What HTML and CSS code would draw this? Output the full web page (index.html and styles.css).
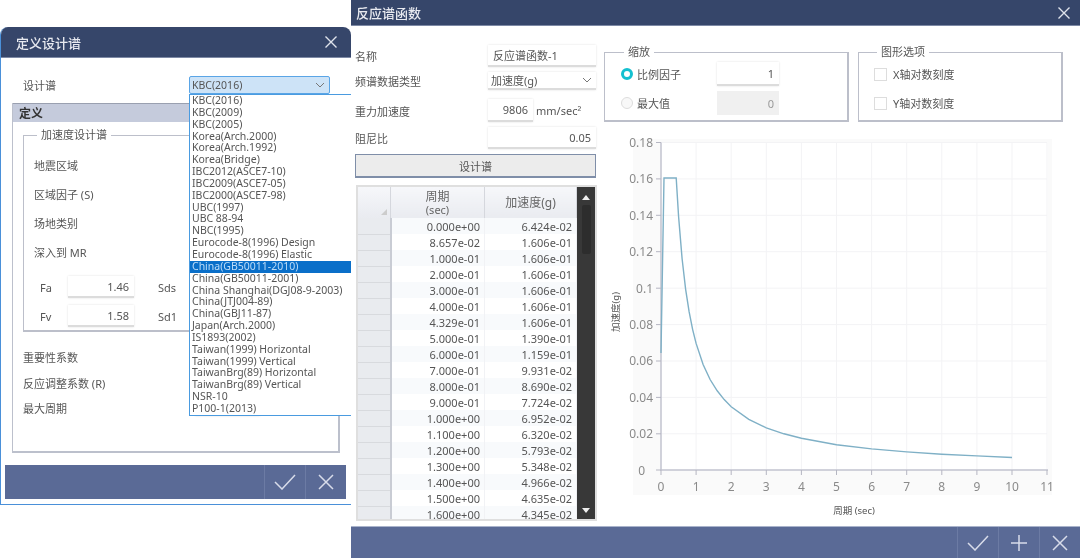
FILE: index.html
```html
<!DOCTYPE html>
<html lang="zh-CN">

<head>
    <meta charset="UTF-8">
    <meta name="viewport" content="width=device-width, initial-scale=1.0">
    <title>反应谱函数</title>
    <link rel="stylesheet" href="styles.css">
</head>

<body>
    <div class="desk">
        <!-- 定义设计谱 -->
        <div class="window window-left">
            <div class="title-bar">
                <span class="title-text">定义设计谱</span>
                <svg class="close-icon" width="14" height="14" viewBox="0 0 14 14">
                    <path d="M1.5 1.5l11 11M12.5 1.5l-11 11" />
                </svg>
            </div>
            <div class="combo-row">
                <span class="combo-label">设计谱</span>
                <div class="combo">
                    <span>KBC(2016)</span>
                    <svg class="chevron" width="10" height="6" viewBox="0 0 10 6">
                        <path d="M1 1l4 4 4-4" />
                    </svg>
                </div>
            </div>
            <div class="def-panel">
                <div class="def-header">定义</div>
                <fieldset class="group accel-group">
                    <legend>加速度设计谱</legend>
                    <div class="param-row">地震区域</div>
                    <div class="param-row">区域因子 (S)</div>
                    <div class="param-row">场地类别</div>
                    <div class="param-row">深入到 MR</div>
                    <div class="coef-row">
                        <span class="coef-name">Fa</span>
                        <div class="input coef-input">1.46</div>
                        <span class="coef-extra">Sds</span>
                    </div>
                    <div class="coef-row">
                        <span class="coef-name">Fv</span>
                        <div class="input coef-input">1.58</div>
                        <span class="coef-extra">Sd1</span>
                    </div>
                </fieldset>
                <div class="factor-list">
                    <div class="factor-row">重要性系数</div>
                    <div class="factor-row">反应调整系数 (R)</div>
                    <div class="factor-row">
                        <span class="factor-name">最大周期</span>
                        <div class="input period-input"></div>
                        <span class="period-unit">sec</span>
                    </div>
                </div>
            </div>
            <div class="action-bar">
                <button class="action-btn">
                    <svg width="22" height="16" viewBox="0 0 22 16"><path d="M1 8l7 7L21 1" /></svg>
                </button>
                <button class="action-btn">
                    <svg width="16" height="16" viewBox="0 0 16 16"><path d="M1 1l14 14M15 1L1 15" /></svg>
                </button>
            </div>
            <ul class="dropdown">
                <li>KBC(2016)</li>
                <li>KBC(2009)</li>
                <li>KBC(2005)</li>
                <li>Korea(Arch.2000)</li>
                <li>Korea(Arch.1992)</li>
                <li>Korea(Bridge)</li>
                <li>IBC2012(ASCE7-10)</li>
                <li>IBC2009(ASCE7-05)</li>
                <li>IBC2000(ASCE7-98)</li>
                <li>UBC(1997)</li>
                <li>UBC 88-94</li>
                <li>NBC(1995)</li>
                <li>Eurocode-8(1996) Design</li>
                <li>Eurocode-8(1996) Elastic</li>
                <li class="selected">China(GB50011-2010)</li>
                <li>China(GB50011-2001)</li>
                <li>China Shanghai(DGJ08-9-2003)</li>
                <li>China(JTJ004-89)</li>
                <li>China(GBJ11-87)</li>
                <li>Japan(Arch.2000)</li>
                <li>IS1893(2002)</li>
                <li>Taiwan(1999) Horizontal</li>
                <li>Taiwan(1999) Vertical</li>
                <li>TaiwanBrg(89) Horizontal</li>
                <li>TaiwanBrg(89) Vertical</li>
                <li>NSR-10</li>
                <li>P100-1(2013)</li>
            </ul>
        </div>

        <!-- 反应谱函数 -->
        <div class="window window-right">
            <div class="title-bar title-bar-small">
                <span class="title-text">反应谱函数</span>
                <svg class="close-icon" width="14" height="14" viewBox="0 0 14 14">
                    <path d="M1.5 1.5l11 11M12.5 1.5l-11 11" />
                </svg>
            </div>
            <div class="func-body">
                <div class="func-left">
                    <div class="form-row row-name">
                        <span class="form-label">名称</span>
                        <div class="input text-left form-input">反应谱函数-1</div>
                    </div>
                    <div class="form-row row-type">
                        <span class="form-label">频谱数据类型</span>
                        <div class="input text-left form-input select">
                            <span>加速度(g)</span>
                            <svg class="chevron" width="10" height="6" viewBox="0 0 10 6">
                                <path d="M1 1l4 4 4-4" />
                            </svg>
                        </div>
                    </div>
                    <div class="form-row row-gravity">
                        <span class="form-label">重力加速度</span>
                        <div class="input gravity-input">9806</div>
                        <span class="unit">mm/sec²</span>
                    </div>
                    <div class="form-row row-damping">
                        <span class="form-label">阻尼比</span>
                        <div class="input form-input">0.05</div>
                    </div>
                    <button class="spectrum-btn">设计谱</button>
                    <div class="grid-wrap">
                        <table class="data-grid">
                            <thead>
                                <tr>
                                    <th class="corner"><span class="corner-mark"></span></th>
                                    <th>周期<br><small>(sec)</small></th>
                                    <th>加速度(g)</th>
                                </tr>
                            </thead>
                            <tbody>
                                <tr><td class="row-head"></td><td>0.000e+00</td><td>6.424e-02</td></tr>
                                <tr><td class="row-head"></td><td>8.657e-02</td><td>1.606e-01</td></tr>
                                <tr><td class="row-head"></td><td>1.000e-01</td><td>1.606e-01</td></tr>
                                <tr><td class="row-head"></td><td>2.000e-01</td><td>1.606e-01</td></tr>
                                <tr><td class="row-head"></td><td>3.000e-01</td><td>1.606e-01</td></tr>
                                <tr><td class="row-head"></td><td>4.000e-01</td><td>1.606e-01</td></tr>
                                <tr><td class="row-head"></td><td>4.329e-01</td><td>1.606e-01</td></tr>
                                <tr><td class="row-head"></td><td>5.000e-01</td><td>1.390e-01</td></tr>
                                <tr><td class="row-head"></td><td>6.000e-01</td><td>1.159e-01</td></tr>
                                <tr><td class="row-head"></td><td>7.000e-01</td><td>9.931e-02</td></tr>
                                <tr><td class="row-head"></td><td>8.000e-01</td><td>8.690e-02</td></tr>
                                <tr><td class="row-head"></td><td>9.000e-01</td><td>7.724e-02</td></tr>
                                <tr><td class="row-head"></td><td>1.000e+00</td><td>6.952e-02</td></tr>
                                <tr><td class="row-head"></td><td>1.100e+00</td><td>6.320e-02</td></tr>
                                <tr><td class="row-head"></td><td>1.200e+00</td><td>5.793e-02</td></tr>
                                <tr><td class="row-head"></td><td>1.300e+00</td><td>5.348e-02</td></tr>
                                <tr><td class="row-head"></td><td>1.400e+00</td><td>4.966e-02</td></tr>
                                <tr><td class="row-head"></td><td>1.500e+00</td><td>4.635e-02</td></tr>
                                <tr><td class="row-head"></td><td>1.600e+00</td><td>4.345e-02</td></tr>
                            </tbody>
                        </table>
                        <div class="scrollbar">
                            <span class="arrow-up"></span>
                            <span class="thumb"></span>
                            <span class="arrow-down"></span>
                        </div>
                    </div>
                </div>
                <div class="func-right">
                    <div class="option-row">
                        <fieldset class="group scale-group">
                            <legend>缩放</legend>
                            <div class="scale-row">
                                <span class="radio radio-on"></span>
                                <span class="scale-label">比例因子</span>
                                <div class="input scale-input">1</div>
                            </div>
                            <div class="scale-row">
                                <span class="radio"></span>
                                <span class="scale-label">最大值</span>
                                <div class="input scale-input input-disabled">0</div>
                            </div>
                        </fieldset>
                        <fieldset class="group graph-group">
                            <legend>图形选项</legend>
                            <div class="check-row"><span class="checkbox"></span>X轴对数刻度</div>
                            <div class="check-row"><span class="checkbox"></span>Y轴对数刻度</div>
                        </fieldset>
                    </div>
                    <!-- viewBox 用页面坐标, 点位直接从表格数据换算 -->
                    <svg class="chart" width="470" height="400" viewBox="604 125 470 400">
                        <rect x="633" y="138" width="419" height="356" fill="#fafafa" />
                        <rect x="661" y="142" width="387" height="327" fill="#fff" />
                        <path class="grid-line" d="M696.1 142V469M731.2 142V469M766.3 142V469M801.4 142V469M836.5 142V469M871.6 142V469M906.7 142V469M941.8 142V469M976.9 142V469M1012 142V469M1047 142V469" />
                        <path class="grid-line" d="M661 141.5H1047M661 177.9H1047M661 214.3H1047M661 250.7H1047M661 287.2H1047M661 323.6H1047M661 360H1047M661 396.4H1047M661 432.8H1047" />
                        <path class="axis-line" d="M661 141.5V469H1048" />
                        <path class="axis-tick" d="M656 141.5h5M656 177.9h5M656 214.3h5M656 250.7h5M656 287.2h5M656 323.6h5M656 360h5M656 396.4h5M656 432.8h5M656 469h5" />
                        <path class="axis-tick" d="M661 469v5M696.1 469v5M731.2 469v5M766.3 469v5M801.4 469v5M836.5 469v5M871.6 469v5M906.7 469v5M941.8 469v5M976.9 469v5M1012 469v5M1047 469v5" />
                        <polyline class="curve" points="661,352 664,177 676.2,177 678.6,215.7 682.1,257.8 685.6,288.1 689.1,310.7 692.6,328.3 696.1,342.4 703.1,363.5 710.1,378.5 717.2,389.8 724.2,398.6 731.2,405.7 748.8,418.3 766.3,426.8 783.9,432.8 801.4,437.3 836.5,443.7 871.6,447.9 906.7,450.9 941.8,453.2 976.9,454.9 1012,456.5" />
                        <g class="y-labels">
                            <text x="653" y="146">0.18</text>
                            <text x="653" y="182">0.16</text>
                            <text x="653" y="219">0.14</text>
                            <text x="653" y="255">0.12</text>
                            <text x="653" y="292">0.1</text>
                            <text x="653" y="328">0.08</text>
                            <text x="653" y="364">0.06</text>
                            <text x="653" y="401">0.04</text>
                            <text x="653" y="437">0.02</text>
                            <text x="645" y="474">0</text>
                        </g>
                        <g class="x-labels">
                            <text x="661" y="490">0</text>
                            <text x="696.1" y="490">1</text>
                            <text x="731.2" y="490">2</text>
                            <text x="766.3" y="490">3</text>
                            <text x="801.4" y="490">4</text>
                            <text x="836.5" y="490">5</text>
                            <text x="871.6" y="490">6</text>
                            <text x="906.7" y="490">7</text>
                            <text x="941.8" y="490">8</text>
                            <text x="976.9" y="490">9</text>
                            <text x="1012" y="490">10</text>
                            <text x="1047" y="490">11</text>
                        </g>
                        <text class="axis-title" x="854" y="513">周期 (sec)</text>
                        <text class="axis-title" transform="translate(619 311) rotate(-90)">加速度(g)</text>
                    </svg>
                </div>
            </div>
            <div class="action-bar action-bar-wide">
                <button class="action-btn">
                    <svg width="22" height="16" viewBox="0 0 22 16"><path d="M1 8l7 7L21 1" /></svg>
                </button>
                <button class="action-btn">
                    <svg width="18" height="18" viewBox="0 0 18 18"><path d="M9 1v16M1 9h16" /></svg>
                </button>
                <button class="action-btn">
                    <svg width="16" height="16" viewBox="0 0 16 16"><path d="M1 1l14 14M15 1L1 15" /></svg>
                </button>
            </div>
        </div>
    </div>
</body>

</html>
```

FILE: styles.css
```css
body {
    margin: 0;
    padding: 0;
    background: #fff;
    color: #555;
    font-family: "Noto Sans", "Noto Sans CJK SC", sans-serif;
    font-size: 11px;
}

.desk {
    position: relative;
    width: 1080px;
    height: 560px;
    overflow: hidden;
    filter: blur(0.4px);
}

.window {
    position: absolute;
    background: #fff;
    box-sizing: border-box;
    overflow: hidden;
}

.window-left {
    left: 0;
    top: 27px;
    width: 351px;
    height: 478px;
    border-left: 1px solid #4a90d9;
    border-bottom: 1px solid #4a90d9;
    border-radius: 8px 8px 0 0;
}

.window-right {
    left: 351px;
    top: 0;
    width: 729px;
    height: 558px;
}

.title-bar {
    height: 30px;
    background: #36466a;
    border-bottom: 1px solid #7d89a5;
    display: flex;
    align-items: center;
    justify-content: space-between;
    padding: 0 13px 0 15px;
}

.title-bar-small {
    height: 25px;
    padding: 0 9px 0 5px;
}

.title-text {
    color: #e8eaf0;
    font-size: 13px;
    font-weight: 500;
}

.close-icon path {
    fill: none;
    stroke: #dfe3ec;
    stroke-width: 1.4;
}

.chevron path {
    fill: none;
    stroke: #777;
    stroke-width: 1;
}

.combo-row {
    display: flex;
    align-items: center;
    margin-top: 18px;
    padding-left: 22px;
}

.combo-label {
    width: 166px;
}

.combo {
    width: 141px;
    height: 18px;
    box-sizing: border-box;
    background: #cde3f7;
    border: 1px solid #5aa5e6;
    border-radius: 2px;
    display: flex;
    align-items: center;
    justify-content: space-between;
    padding: 0 4px 0 2px;
    font-size: 10.5px;
}

.def-panel {
    margin: 9px 0 0 11px;
    width: 328px;
    height: 350px;
    box-sizing: border-box;
    border: 1px solid #bcc0cc;
    border-top: 0;
    border-bottom-width: 2px;
    border-right-width: 2px;
}

.def-header {
    height: 19px;
    line-height: 20px;
    background: #c5cbdc;
    border-top: 1px solid #9aa0b0;
    box-sizing: border-box;
    padding-left: 6px;
    font-size: 12px;
    font-weight: bold;
    color: #333;
}

.group {
    margin: 0;
    padding: 0;
    border: 1px solid #bcbfca;
    border-width: 1px 2px 2px 1px;
    min-width: 0;
}

.group legend {
    padding: 0 4px;
    margin-left: 3px;
    font-size: 11px;
    line-height: 14px;
}

.accel-group {
    margin: 6px 0 0 10px;
    width: 305px;
    height: 204px;
    box-sizing: border-box;
    padding: 9px 10px 0;
}

.param-row {
    height: 29px;
    line-height: 29px;
}

.coef-row {
    display: flex;
    align-items: center;
    height: 22px;
    margin-bottom: 7px;
    padding-left: 6px;
}

.param-row + .coef-row {
    margin-top: 9px;
}

.coef-name {
    width: 28px;
}

.coef-extra {
    margin-left: 24px;
}

.input {
    box-sizing: border-box;
    background: #fff;
    text-align: right;
    padding: 0 5px;
    border-bottom: 2px solid #dcdcdc;
    box-shadow: 0 0 2px rgba(0, 0, 0, 0.12);
    font-size: 11px;
    display: flex;
    align-items: center;
    justify-content: flex-end;
}

.coef-input {
    width: 66px;
    height: 22px;
}

.factor-list {
    margin-top: 13px;
    padding-left: 10px;
}

.factor-row {
    height: 25.5px;
    line-height: 25.5px;
    display: flex;
}

.factor-name {
    width: 172px;
}

.period-input {
    width: 65px;
    height: 20px;
}

.period-unit {
    margin-left: 17px;
}

.action-bar {
    margin: 12px 0 0 4px;
    width: 341px;
    height: 34px;
    background: #5a6a96;
    display: flex;
    justify-content: flex-end;
}

.action-bar-wide {
    margin: 0;
    width: 729px;
    height: 33px;
    border-top: 1px solid #a9b3cb;
    box-sizing: border-box;
}

.action-btn {
    width: 41px;
    border: 0;
    border-left: 1px solid #6c7ba4;
    background: transparent;
    padding: 0;
    display: flex;
    align-items: center;
    justify-content: center;
}

.action-btn svg path {
    fill: none;
    stroke: #d8dcea;
    stroke-width: 1.5;
}

.dropdown {
    position: absolute;
    left: 188px;
    top: 67px;
    width: 172px;
    margin: 0;
    padding: 0;
    list-style: none;
    background: #fff;
    border: 1px solid #4a9be0;
    font-size: 10.5px;
}

.dropdown li {
    height: 11.85px;
    line-height: 11.85px;
    padding-left: 2px;
    white-space: nowrap;
}

.dropdown .selected {
    background: #0a6fc9;
    color: #bcdcf8;
}

.func-body {
    display: flex;
    height: 500px;
}

.func-left {
    width: 241px;
    margin-left: 4px;
}

.form-row {
    display: flex;
    align-items: center;
}

.form-label {
    width: 133px;
    flex-shrink: 0;
}

.form-input {
    width: 108px;
    height: 100%;
}

.text-left {
    justify-content: flex-start;
}

.select {
    justify-content: space-between;
    padding-right: 4px;
    padding-left: 3px;
}

.row-name {
    height: 22px;
    margin-top: 19px;
}

.row-type {
    height: 18px;
    margin-top: 5px;
}

.row-gravity {
    height: 23px;
    margin-top: 9px;
}

.row-damping {
    height: 22px;
    margin-top: 5px;
}

.gravity-input {
    width: 45px;
    height: 100%;
}

.unit {
    margin-left: 3px;
}

.spectrum-btn {
    display: block;
    width: 241px;
    height: 24px;
    margin-top: 5px;
    background: #ececec;
    border: 1px solid #7f8ea8;
    border-bottom-width: 2px;
    color: #555;
    font: inherit;
}

.grid-wrap {
    display: flex;
    width: 241px;
    height: 336px;
    margin-top: 7px;
    margin-left: 1px;
    box-sizing: border-box;
    overflow: hidden;
    background: #fff;
    border: 2px solid #dfdfdf;
    border-right-width: 2px;
}

.data-grid {
    width: 219px;
    table-layout: fixed;
    border-collapse: collapse;
    flex-shrink: 0;
    align-self: flex-start;
    font-size: 11px;
}

.data-grid th {
    height: 31px;
    padding: 0;
    line-height: 13px;
    font-weight: 400;
    font-size: 12px;
    color: #666;
    background: linear-gradient(#f6f7fa, #e9ebf0);
    border-right: 1px solid #d5d7dd;
}

.data-grid th small {
    font-size: 11px;
}

.data-grid th:first-child {
    width: 32px;
}

.data-grid th:nth-child(2) {
    width: 93px;
}

.corner {
    position: relative;
}

.corner-mark {
    position: absolute;
    right: 3px;
    bottom: 3px;
    width: 0;
    height: 0;
    border-left: 6px solid transparent;
    border-bottom: 6px solid #ccc;
}

.data-grid td {
    height: 16px;
    padding: 0 4px 0 0;
    line-height: 15px;
    text-align: right;
    box-sizing: border-box;
    border-right: 1px solid #f1f2f5;
}

.data-grid tr:nth-child(odd) td {
    background: #f8fafc;
}

.data-grid .row-head,
.data-grid tr:nth-child(odd) .row-head {
    background: #e9ebef;
    border-bottom: 1px solid #d8dade;
    border-right: 2px solid #c9ccd4;
}

.scrollbar {
    position: relative;
    width: 18px;
    background: #383838;
    display: flex;
    flex-direction: column;
    align-items: center;
}

.arrow-up {
    margin-top: 8px;
    border: 4px solid transparent;
    border-top: 0;
    border-bottom: 5px solid #eee;
}

.thumb {
    width: 9px;
    height: 49px;
    margin-top: 5px;
    border-radius: 2px;
    background: #2d2d2d;
}

.arrow-down {
    margin-top: auto;
    margin-bottom: 6px;
    border: 4px solid transparent;
    border-bottom: 0;
    border-top: 5px solid #eee;
}

.func-right {
    margin-left: 8px;
}

.option-row {
    display: flex;
    gap: 9px;
    margin-top: 19px;
    height: 77px;
}

.scale-group {
    width: 245px;
    height: 77px;
    box-sizing: border-box;
    padding: 3px 0 0 16px;
}

.graph-group {
    width: 205px;
    height: 77px;
    box-sizing: border-box;
    padding: 8px 0 0 15px;
}

.scale-row {
    display: flex;
    align-items: center;
    height: 24px;
    margin-bottom: 5px;
}

.radio {
    width: 12px;
    height: 12px;
    box-sizing: border-box;
    border: 1px solid #ddd;
    border-radius: 50%;
    background: #f8f8f8;
}

.radio-on {
    border: 3px solid #14c0d0;
    background: #fff;
}

.scale-label {
    width: 80px;
    margin-left: 4px;
}

.scale-input {
    width: 62px;
    height: 100%;
}

.input-disabled {
    background: #f0f0f0;
    border-bottom: 0;
    box-shadow: none;
    color: #999;
}

.check-row {
    display: flex;
    align-items: center;
    height: 14px;
    margin-bottom: 15px;
}

.checkbox {
    width: 11px;
    height: 11px;
    margin-right: 6px;
    border: 1px solid #ddd;
    background: #fff;
}

.chart {
    display: block;
    margin-top: 4px;
}

.chart text {
    font-family: "Noto Sans", "Noto Sans CJK SC", sans-serif;
}

.grid-line {
    fill: none;
    stroke: #f3f3f5;
    stroke-width: 1;
}

.axis-line {
    fill: none;
    stroke: #c2c3cf;
    stroke-width: 1.5;
}

.axis-tick {
    fill: none;
    stroke: #b5b6c2;
    stroke-width: 1;
}

.curve {
    fill: none;
    stroke: #7fb0c6;
    stroke-width: 1.4;
}

.y-labels text {
    font-size: 12px;
    fill: #8a8a8a;
    text-anchor: end;
}

.x-labels text {
    font-size: 12px;
    fill: #8a8a8a;
    text-anchor: middle;
}

.axis-title {
    font-size: 9.5px;
    fill: #555;
    text-anchor: middle;
}
```
